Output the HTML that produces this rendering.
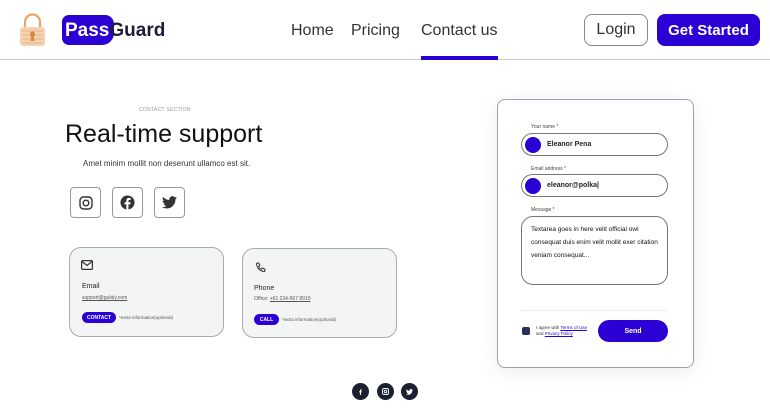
<!DOCTYPE html>
<html><head><meta charset="utf-8"><style>
*{margin:0;padding:0;box-sizing:border-box}
body{width:770px;height:414px;background:#fff;font-family:"Liberation Sans",sans-serif;position:relative;overflow:hidden;color:#222}
.a{position:absolute}
.nav{font-size:16px;color:#333;top:22px}
.btn{border-radius:8px;font-size:16px;display:flex;align-items:center;justify-content:center}
.soc{width:31px;height:31px;border:1px solid #999;border-radius:4px;display:flex;align-items:center;justify-content:center}
.card{background:#f3f4f4;border:1px solid #a9a9b0;border-radius:12px}
.pill{background:#2a00d4;color:#fff;border-radius:8px;font-size:5px;font-weight:bold;display:flex;align-items:center;justify-content:center}
.lbl{font-size:5px;color:#444}
.inp{border:1px solid #777;border-radius:12px;display:flex;align-items:center;font-size:7px;font-weight:bold;color:#222}
.dot{width:16px;height:16px;border-radius:50%;background:#2a00d4;margin:0 6px 0 3px}
.bc{width:17px;height:17px;border-radius:50%;background:#1c2130;top:383px;display:flex;align-items:center;justify-content:center}
</style></head><body>
<svg class="a" style="left:18px;top:13px" width="29" height="34" viewBox="0 0 29 34"><path d="M7 14V9a7.5 7.5 0 0 1 15 0v5" fill="none" stroke="#e8a76a" stroke-width="2.2"/><rect x="2" y="14" width="25" height="19" rx="3" fill="#f3d3b3"/><path d="M4 18h21M4 22h21M4 26h21M4 30h21" stroke="#e8b080" stroke-width="1"/><circle cx="14.5" cy="21" r="2.5" fill="#d8883f"/><path d="M13.3 22h2.4l.8 6h-4z" fill="#d8883f"/></svg>
<div class="a" style="left:62px;top:15px;width:52px;height:30px;background:#2a00d4;border-radius:7px 9px 12px 7px"></div>
<div class="a" style="left:65px;top:20px;font-size:19px;font-weight:bold;color:#fff">Pass<span style="color:#1d1d3a">Guard</span></div>
<div class="a nav" style="left:291px">Home</div>
<div class="a nav" style="left:351px">Pricing</div>
<div class="a nav" style="left:421px">Contact us</div>
<div class="a" style="left:0;top:59px;width:770px;height:1px;background:#ccc"></div>
<div class="a" style="left:421px;top:56px;width:77px;height:4px;background:#2a00d4"></div>
<div class="a btn" style="left:584px;top:14px;width:64px;height:32px;border:1px solid #888;color:#333">Login</div>
<div class="a btn" style="left:657px;top:14px;width:103px;height:32px;background:#2a00d4;color:#fff;font-weight:bold;font-size:15px">Get Started</div>

<div class="a" style="left:139px;top:107px;font-size:5px;color:#999;letter-spacing:.3px">CONTACT SECTION</div>
<div class="a" style="left:65px;top:120px;font-size:25px;color:#111">Real-time support</div>
<div class="a" style="left:83px;top:159px;font-size:8px;color:#333">Amet minim mollit non deserunt ullamco est sit.</div>
<div class="a soc" style="left:70px;top:187px"><svg width="14" height="14" viewBox="0 0 14 14" fill="none" stroke="#333" stroke-width="1.4"><rect x="1" y="1" width="12" height="12" rx="3.5"/><circle cx="7" cy="7" r="2.8"/></svg></div>
<div class="a soc" style="left:112px;top:187px"><svg width="15" height="15" viewBox="0 0 16 16"><circle cx="8" cy="8" r="7.5" fill="#333"/><path d="M9 16v-6h2l.3-2.3H9V6.3c0-.6.2-1 1-1h1.3V3.2C11 3.1 10.3 3 9.6 3 8 3 6.8 4 6.8 5.8v1.9h-2V10h2v6z" fill="#fff"/></svg></div>
<div class="a soc" style="left:154px;top:187px"><svg width="15" height="13" viewBox="0 0 24 20"><path d="M24 2.3a10 10 0 0 1-2.8.8A5 5 0 0 0 23.3.4a10 10 0 0 1-3.1 1.2A4.9 4.9 0 0 0 11.8 6 14 14 0 0 1 1.7.9a4.9 4.9 0 0 0 1.5 6.6 4.9 4.9 0 0 1-2.2-.6 4.9 4.9 0 0 0 3.9 4.9 5 5 0 0 1-2.2.1 4.9 4.9 0 0 0 4.6 3.4A9.9 9.9 0 0 1 0 17.3 14 14 0 0 0 7.5 19.5c9.1 0 14-7.5 14-14v-.6A10 10 0 0 0 24 2.3z" fill="#333"/></svg></div>

<div class="a card" style="left:69px;top:247px;width:155px;height:90px"></div>
<svg class="a" style="left:81px;top:260px" width="12" height="10" viewBox="0 0 12 10" fill="none" stroke="#333" stroke-width="1.2"><rect x=".6" y=".6" width="10.8" height="8.8" rx="1"/><path d="M1 1.5l5 4 5-4"/></svg>
<div class="a" style="left:82px;top:283px;font-size:7px;color:#222">Email</div>
<div class="a" style="left:82px;top:295px;font-size:5px;color:#555;text-decoration:underline">support@gulaly.com</div>
<div class="a pill" style="left:82px;top:312px;width:34px;height:11px">CONTACT</div>
<div class="a" style="left:119px;top:315px;font-size:4.5px;color:#555">*extra information(optional)</div>

<div class="a card" style="left:242px;top:248px;width:155px;height:90px"></div>
<svg class="a" style="left:255px;top:262px" width="11" height="11" viewBox="0 0 12 12"><path d="M1.5 1.5l2.5-.5 1.3 2.7-1.4 1c.7 1.5 1.8 2.6 3.3 3.3l1-1.4 2.8 1.3-.5 2.5C5.5 10.2 1.8 6.5 1.5 1.5z" fill="none" stroke="#333" stroke-width="1.1"/></svg>
<div class="a" style="left:254px;top:285px;font-size:7px;color:#222">Phone</div>
<div class="a" style="left:254px;top:296px;font-size:5px;color:#555">Office: <u>+61 234-567 8910</u></div>
<div class="a pill" style="left:254px;top:314px;width:25px;height:11px">CALL</div>
<div class="a" style="left:282px;top:317px;font-size:4.5px;color:#555">*extra information(optional)</div>

<div class="a" style="left:497px;top:99px;width:197px;height:269px;border:1px solid #a0a0ac;border-radius:8px;box-shadow:0 4px 20px rgba(0,0,0,.08)"></div>
<div class="a lbl" style="left:531px;top:124px">Your name *</div>
<div class="a inp" style="left:521px;top:133px;width:147px;height:23px"><span class="dot"></span>Eleanor Pena</div>
<div class="a lbl" style="left:531px;top:166px">Email address *</div>
<div class="a inp" style="left:521px;top:174px;width:147px;height:23px"><span class="dot"></span>eleanor@polka|</div>
<div class="a lbl" style="left:531px;top:207px">Message *</div>
<div class="a inp" style="left:521px;top:216px;width:147px;height:69px;align-items:flex-start;padding:6px 9px;line-height:13px;font-size:6.5px;font-weight:normal;color:#111">Textarea goes in here velit official owl consequat duis enim velit mollit exer citation veniam consequat...</div>
<div class="a" style="left:521px;top:310px;width:147px;height:1px;background:#eee"></div>
<div class="a" style="left:522px;top:327px;width:8px;height:8px;background:#2b2f55;border-radius:2px"></div>
<div class="a" style="left:536px;top:325px;font-size:4.5px;color:#333;line-height:6px">I agree with <u style="color:#2a00d4">Terms of Use</u><br>and <u style="color:#2a00d4">Privacy Policy</u></div>
<div class="a pill" style="left:598px;top:320px;width:70px;height:22px;border-radius:11px;font-size:7px">Send</div>

<div class="a bc" style="left:352px"><svg width="7" height="7" viewBox="0 0 16 16"><path d="M9 16v-6h2l.3-2.3H9V6.3c0-.6.2-1 1-1h1.3V3.2C11 3.1 10.3 3 9.6 3 8 3 6.8 4 6.8 5.8v1.9h-2V10h2v6z" fill="#fff"/></svg></div>
<div class="a bc" style="left:377px"><svg width="7" height="7" viewBox="0 0 14 14" fill="none" stroke="#fff" stroke-width="1.8"><rect x="1" y="1" width="12" height="12" rx="3"/><circle cx="7" cy="7" r="2.6"/></svg></div>
<div class="a bc" style="left:401px"><svg width="7" height="6" viewBox="0 0 24 20"><path d="M24 2.3a10 10 0 0 1-2.8.8A5 5 0 0 0 23.3.4a10 10 0 0 1-3.1 1.2A4.9 4.9 0 0 0 11.8 6 14 14 0 0 1 1.7.9a4.9 4.9 0 0 0 1.5 6.6 4.9 4.9 0 0 1-2.2-.6 4.9 4.9 0 0 0 3.9 4.9 5 5 0 0 1-2.2.1 4.9 4.9 0 0 0 4.6 3.4A9.9 9.9 0 0 1 0 17.3 14 14 0 0 0 7.5 19.5c9.1 0 14-7.5 14-14v-.6A10 10 0 0 0 24 2.3z" fill="#fff"/></svg></div>
</body></html>
